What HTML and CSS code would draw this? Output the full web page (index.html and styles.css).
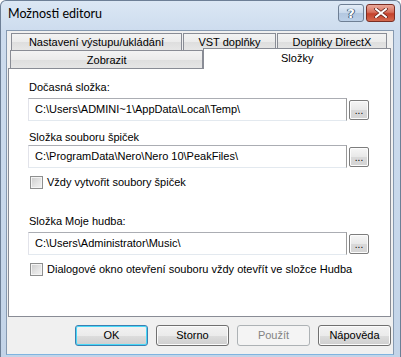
FILE: index.html
```html
<!DOCTYPE html>
<html lang="cs">
<head>
<meta charset="utf-8">
<link rel="stylesheet" href="styles.css">
</head>
<body>
<div class="window">
  <div class="titlebar">
    <span class="title">Možnosti editoru</span>
    <div class="caption-btns">
      <div class="cbtn help"><span>?</span></div>
      <div class="cbtn close">
        <svg width="14" height="10" viewBox="0 0 14 10"><path d="M2 1 L12 9 M12 1 L2 9" stroke="#5a1a12" stroke-width="3.4" stroke-linecap="square"/><path d="M2 1 L12 9 M12 1 L2 9" stroke="#fff" stroke-width="2" stroke-linecap="square"/></svg>
      </div>
    </div>
  </div>
  <div class="client">
    <div class="tabs">
      <div class="tabrow back">
        <div class="tab t1">Nastavení výstupu/ukládání</div>
        <div class="tab t2">VST doplňky</div>
        <div class="tab t3">Doplňky DirectX</div>
      </div>
      <div class="tabrow front">
        <div class="tab t4">Zobrazit</div>
        <div class="tab t5 active">Složky</div>
      </div>
    </div>
    <div class="panel">
      <div class="label l1">Dočasná složka:</div>
      <div class="field-row">
        <div class="field">C:\Users\ADMINI~1\AppData\Local\Temp\</div>
        <div class="browse"><span>...</span></div>
      </div>
      <div class="label l2">Složka souboru špiček</div>
      <div class="field-row">
        <div class="field">C:\ProgramData\Nero\Nero 10\PeakFiles\</div>
        <div class="browse"><span>...</span></div>
      </div>
      <div class="check c1"><span class="box"></span><span>Vždy vytvořit soubory špiček</span></div>
      <div class="label l3">Složka Moje hudba:</div>
      <div class="field-row">
        <div class="field">C:\Users\Administrator\Music\</div>
        <div class="browse"><span>...</span></div>
      </div>
      <div class="check c2"><span class="box"></span><span>Dialogové okno otevření souboru vždy otevřít ve složce Hudba</span></div>
    </div>
    <div class="buttons">
      <div class="btn default">OK</div>
      <div class="btn">Storno</div>
      <div class="btn disabled">Použít</div>
      <div class="btn">Nápověda</div>
    </div>
  </div>
</div>
</body>
</html>
```

FILE: styles.css
```css
* { box-sizing: border-box; }
html, body { margin: 0; padding: 0; background: #ffffff; }
body { width: 401px; height: 357px; overflow: hidden; }

.window {
  width: 401px;
  height: 357px;
  background: linear-gradient(to bottom, #dbe7f4 0px, #cddcee 30px, #c3d4e8 100%);
  border-left: 1px solid #6d7f96;
  border-right: 1px solid #6d7f96;
  border-top: 1px solid #6d7f96;
  border-radius: 6px 6px 0 0;
  display: flex;
  flex-direction: column;
  padding: 0 6px 2px 5px;
  font-family: "Liberation Sans", Arial, sans-serif;
  font-size: 11px;
  color: #000;
}

.titlebar {
  height: 29px;
  display: flex;
  align-items: flex-start;
  justify-content: space-between;
}
.title {
  font-family: "Lato", "Noto Sans", sans-serif;
  font-size: 12.5px;
  margin-top: 5px;
  margin-left: 2px;
  color: #000;
}
.caption-btns {
  display: flex;
  margin-top: 3px;
  gap: 2px;
  margin-right: -1px;
}
.cbtn {
  height: 18px;
  border: 1px solid #6e7f94;
  border-radius: 3px;
  display: flex;
  align-items: center;
  justify-content: center;
}
.help {
  width: 26px;
  background: linear-gradient(to bottom, #e4edf7 0%, #c9d9ec 48%, #b3c7e0 52%, #bcd0e8 100%);
}
.help span {
  font-family: "DejaVu Sans", sans-serif;
  font-weight: bold;
  font-size: 13px;
  color: #fff;
  text-shadow: 0 0 1px #46617f, 0 0 1px #46617f, 1px 0 0 #46617f, -1px 0 0 #46617f;
}
.close {
  width: 29px;
  border-color: #7a2e24;
  background: linear-gradient(to bottom, #e9a99b 0%, #d7705d 45%, #c4412b 55%, #d4694f 100%);
}

.client {
  flex: 1;
  background: #f0f0f0;
  border: 1px solid #8699b0;
  border-bottom: 1px solid #7fb4e0;
  display: flex;
  flex-direction: column;
  padding: 0 2px 0 1px;
}

.tabs {
  padding-top: 2px;
  position: relative;
}
.tabrow { display: flex; }
.tab {
  border: 1px solid #898c95;
  border-bottom: none;
  background: linear-gradient(to bottom, #f3f3f3 0%, #ebebeb 50%, #dedede 51%, #e6e6e6 100%);
  text-align: center;
  line-height: 15px;
}
.back { margin-left: 3px; gap: 1px; height: 17px; }
.back .tab { height: 17px; padding-top: 1px; }
.t1 { width: 171px; }
.t2 { width: 93px; }
.t3 { width: 110px; }
.front { height: 18px; margin-left: 2px; }
.t4 { width: 194px; height: 18px; padding-top: 2px; }
.t5 {
  width: 188px;
  height: 21px;
  margin-top: -2px;
  background: #ffffff;
  position: relative;
  z-index: 2;
  padding-top: 2px;
}

.panel {
  margin-top: 0;
  height: 249px;
  background: #ffffff;
  border: 1px solid #898c95;
  padding: 0 0 0 19px;
  display: flex;
  flex-direction: column;
}
.label { line-height: 13px; padding-left: 1px; }
.l1 { margin-top: 12px; }
.l2 { margin-top: 10px; }
.l3 { margin-top: 26px; }
.field-row {
  display: flex;
  align-items: center;
  gap: 2px;
  margin-top: 4px;
}
.l2 + .field-row { margin-top: 1px; }
.field {
  width: 319px;
  height: 23px;
  background: #fff;
  border: 1px solid #e2e3ea;
  border-top-color: #abadb3;
  border-right-color: #9a9a9a;
  border-bottom-color: #e3e9ef;
  padding-left: 6px;
  line-height: 21px;
  white-space: nowrap;
  overflow: hidden;
}
.browse {
  width: 20px;
  height: 20px;
  border: 1px solid #7d7d7d;
  border-radius: 2px;
  background: linear-gradient(to bottom, #f6f6f6 0%, #e8e8e8 50%, #d9d9d9 51%, #d4d4d4 100%);
  box-shadow: inset 0 0 0 1px #fcfcfc;
  display: flex;
  justify-content: center;
  align-items: flex-end;
  font-size: 10px;
  line-height: 12px;
  padding-bottom: 2px;
  letter-spacing: 0px;
}
.check {
  display: flex;
  align-items: center;
  gap: 4px;
  line-height: 13px;
  margin-left: 2px;
}
.c1 { margin-top: 8px; }
.c2 { margin-top: 8px; }
.box {
  width: 13px;
  height: 13px;
  border: 1px solid #8e8f8f;
  background: linear-gradient(135deg, #cbcbcb 0%, #e6e6e6 60%, #f2f2f2 100%);
  box-shadow: inset 0 0 0 1px #f4f4f4;
  flex: none;
}

.buttons {
  display: flex;
  justify-content: flex-end;
  gap: 8px;
  margin-top: 8px;
  padding-right: 0px;
}
.btn {
  width: 73px;
  height: 21px;
  border: 1px solid #707070;
  border-radius: 3px;
  background: linear-gradient(to bottom, #f2f2f2 0%, #ebebeb 50%, #dddddd 51%, #cfcfcf 100%);
  box-shadow: inset 0 0 0 1px #fbfbfb;
  text-align: center;
  line-height: 19px;
}
.btn.default {
  border-color: #3c7fb1;
  box-shadow: inset 0 0 0 1px #48d8f8;
}
.btn.disabled {
  border-color: #adb2b5;
  background: #f4f4f4;
  box-shadow: none;
  color: #838383;
}
```
